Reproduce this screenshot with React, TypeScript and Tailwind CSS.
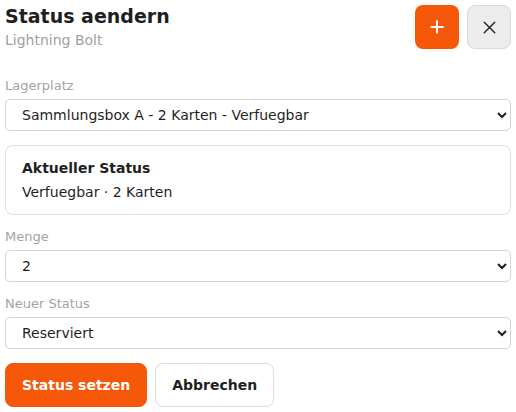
import { Plus, X } from 'lucide-react';

const FONT = "font-['DejaVu_Sans',_'Liberation_Sans',_sans-serif]";

function Field({ label, value, options, className }: { label: string; value: string; options: string[]; className?: string }) {
  return (
    <div className={className}>
      <label className="mb-1 block text-[13px] leading-[19px] text-[#a3a3a3]">{label}</label>
      <select
        defaultValue={value}
        className="block h-8 w-full rounded-[5px] border border-[#d4d4d4] bg-white pl-3 text-sm text-[#1f1f1f]"
      >
        {options.map((o) => (
          <option key={o}>{o}</option>
        ))}
      </select>
    </div>
  );
}

export default function App() {
  return (
    <div className={`${FONT} min-h-screen bg-white p-[5px] text-[#1f1f1f]`}>
      <div className="flex items-start justify-between">
        <div>
          <h1 className="text-[19px] font-bold leading-[22px]">Status aendern</h1>
          <p className="mt-[3px] text-sm text-[#a0a0a0]">Lightning Bolt</p>
        </div>
        <div className="flex gap-2">
          <button className="flex h-11 w-11 items-center justify-center rounded-lg bg-[#f6580a] text-white">
            <Plus size={20} strokeWidth={2.4} />
          </button>
          <button className="flex h-11 w-11 items-center justify-center rounded-lg border border-[#d9d9d9] bg-[#ececec] text-[#222]">
            <X size={21} strokeWidth={1.6} />
          </button>
        </div>
      </div>

      <Field
        className="mt-[26px]"
        label="Lagerplatz"
        value="Sammlungsbox A - 2 Karten - Verfuegbar"
        options={['Sammlungsbox A - 2 Karten - Verfuegbar']}
      />

      <div className="mt-[14px] rounded-lg border border-[#e0e0e0] px-4 py-3 text-sm">
        <div className="font-bold leading-5">Aktueller Status</div>
        <div className="mt-1 leading-5">Verfuegbar · 2 Karten</div>
      </div>

      <Field className="mt-3" label="Menge" value="2" options={['1', '2']} />
      <Field className="mt-3" label="Neuer Status" value="Reserviert" options={['Verfuegbar', 'Reserviert', 'Verkauft']} />

      <div className="mt-[14px] flex gap-2">
        <button className="h-11 rounded-lg border border-[#f6580a] bg-[#f6580a] px-4 text-sm font-bold text-white">
          Status setzen
        </button>
        <button className="h-11 rounded-lg border border-[#dcdcdc] bg-white px-4 text-sm font-bold text-[#1f1f1f]">
          Abbrechen
        </button>
      </div>
    </div>
  );
}
